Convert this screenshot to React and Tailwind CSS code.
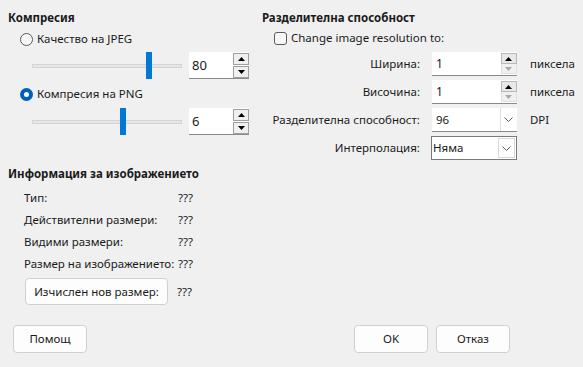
import React from "react";

const Up = ({ c = "#000" }) => (
  <svg width="7" height="4" viewBox="0 0 7 4"><path d="M0 4 L3.5 0 L7 4 Z" fill={c} /></svg>
);
const Down = ({ c = "#000" }) => (
  <svg width="7" height="4" viewBox="0 0 7 4"><path d="M0 0 L3.5 4 L7 0 Z" fill={c} /></svg>
);
const Chevron = () => (
  <svg width="9" height="5" viewBox="0 0 9 5"><path d="M0.5 0.5 L4.5 4.5 L8.5 0.5" stroke="#606060" strokeWidth="1" fill="none" /></svg>
);

function Slider({ pos }) {
  return (
    <div className="relative w-[150px] h-[27px]">
      <div className="absolute left-0 right-0 top-[12px] h-[4px] bg-[#e6e6e6] border border-[#d4d4d4]" />
      <div className="absolute top-0 h-[27px] w-[6px] bg-[#0078d4]" style={{ left: pos }} />
    </div>
  );
}

function LeftSpin({ value }) {
  return (
    <div className="flex w-[60px] h-[27px] bg-white border-b border-[#8a8a8a]">
      <div className="flex-1 flex items-center pl-[3px] text-[13px]">{value}</div>
      <div className="flex flex-col w-[16px] pt-[1px] gap-[1px]">
        <div className="h-[12px] border border-[#a0a0a0] bg-[#f0f0f0] flex items-center justify-center"><Up /></div>
        <div className="h-[12px] border border-[#a0a0a0] bg-[#f0f0f0] flex items-center justify-center"><Down /></div>
      </div>
    </div>
  );
}

function RightSpin({ value }) {
  return (
    <div className="flex w-[85px] h-[24px] bg-white border-b border-[#8a8a8a]">
      <div className="flex-1 flex items-center pl-[4px] text-[12px]">{value}</div>
      <div className="flex flex-col w-[16px] pt-[1px]">
        <div className="h-[11px] border border-[#b8b8b8] bg-[#e8e8e8] flex items-center justify-center"><Up /></div>
        <div className="h-[10px] border-x border-b border-[#e0e0e0] bg-[#f0f0f0] flex items-center justify-center"><Down c="#a8a8a8" /></div>
      </div>
    </div>
  );
}

function Row({ label, children, unit }) {
  return (
    <div className="flex items-center h-[24px]">
      <div className="w-[158px] text-right whitespace-nowrap">{label}</div>
      <div className="ml-[12px]">{children}</div>
      {unit && <div className="ml-[13px]">{unit}</div>}
    </div>
  );
}

function Button({ children, className = "" }) {
  return (
    <div className={"h-[28px] w-[74px] flex items-center justify-center rounded-[4px] bg-[#fdfdfd] border border-[#d0d0d0] " + className}>
      {children}
    </div>
  );
}

export default function App() {
  return (
    <div className="w-[583px] h-[367px] bg-[#f0f0f0] text-[11.5px] text-[#1a1a1a] font-['Noto_Sans',sans-serif] leading-[16px] pt-[10px] px-[8px] overflow-hidden whitespace-nowrap">
      <div className="flex">
        {/* компресия */}
        <div className="w-[254px]">
          <div className="font-bold h-[16px]">Компресия</div>
          <div className="mt-[5px] h-[16px] flex items-center pl-[12px]">
            <div className="w-[13px] h-[13px] rounded-full border border-[#5a5a5a] bg-[#f7f7f7]" />
            <span className="ml-[4px]">Качество на JPEG</span>
          </div>
          <div className="mt-[5px] flex items-center pl-[24px]">
            <Slider pos={114} />
            <div className="ml-[7px]"><LeftSpin value="80" /></div>
          </div>
          <div className="mt-[7px] h-[16px] flex items-center pl-[12px]">
            <div className="w-[13px] h-[13px] rounded-full bg-[#005fb8] flex items-center justify-center">
              <div className="w-[5px] h-[5px] rounded-full bg-white" />
            </div>
            <span className="ml-[4px]">Компресия на PNG</span>
          </div>
          <div className="mt-[6px] flex items-center pl-[24px]">
            <Slider pos={88} />
            <div className="ml-[7px]"><LeftSpin value="6" /></div>
          </div>
        </div>

        {/* разделителна способност */}
        <div className="flex-1">
          <div className="font-bold h-[16px]">Разделителна способност</div>
          <div className="mt-[4px] h-[16px] flex items-center pl-[12px]">
            <div className="w-[13px] h-[13px] rounded-[3px] border border-[#5a5a5a] bg-[#f7f7f7]" />
            <span className="ml-[4px]">Change image resolution to:</span>
          </div>
          <div className="mt-[6px] flex flex-col gap-[4px]">
            <Row label="Ширина:" unit="пиксела"><RightSpin value="1" /></Row>
            <Row label="Височина:" unit="пиксела"><RightSpin value="1" /></Row>
            <Row label="Разделителна способност:" unit="DPI">
              <div className="flex w-[85px] h-[24px] bg-white border-b border-[#8a8a8a]">
                <div className="flex-1 flex items-center pl-[4px]">96</div>
                <div className="w-[17px] border-l border-[#e0e0e0] flex items-center justify-center"><Chevron /></div>
              </div>
            </Row>
            <Row label="Интерполация:">
              <div className="flex w-[86px] h-[24px] bg-white border border-[#7a7a7a] -ml-[1px]">
                <div className="flex-1 flex items-center pl-[1px]">Няма</div>
                <div className="w-[17px] my-[1px] mr-[1px] border border-[#d8d8d8] flex items-center justify-center"><Chevron /></div>
              </div>
            </Row>
          </div>
        </div>
      </div>

      {/* информация */}
      <div className="mt-[6px] font-bold h-[16px]">Информация за изображението</div>
      <div className="mt-[5px] pl-[16px]">
        {[
          ["Тип:", "???"],
          ["Действителни размери:", "???"],
          ["Видими размери:", "???"],
          ["Размер на изображението:", "???"],
        ].map(([l, v]) => (
          <div key={l} className="flex items-center h-[22px]">
            <div className="w-[154px]">{l}</div>
            <div>{v}</div>
          </div>
        ))}
        <div className="mt-[3px] flex items-center">
          <div className="w-[143px] h-[27px] ml-[1px] flex items-center justify-center rounded-[4px] bg-[#fdfdfd] border border-[#d0d0d0]">
            Изчислен нов размер:
          </div>
          <div className="ml-[9px]">???</div>
        </div>
      </div>

      {/* бутони */}
      <div className="mt-[20px] flex pl-[5px] pr-[65px]">
        <Button>Помощ</Button>
        <div className="flex-1" />
        <Button className="border-[#005fb8]">OK</Button>
        <Button className="ml-[8px]">Отказ</Button>
      </div>
    </div>
  );
}
